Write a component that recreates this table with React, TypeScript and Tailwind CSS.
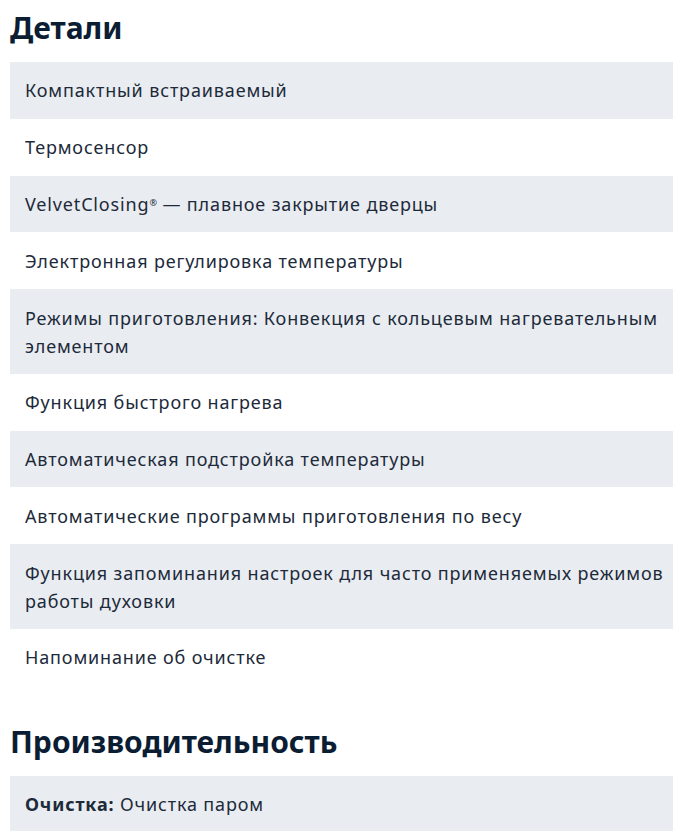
const details: React.ReactNode[] = [
  "Компактный встраиваемый",
  "Термосенсор",
  <>
    VelvetClosing<sup className="text-[9px] tracking-normal">®</sup> — плавное закрытие дверцы
  </>,
  "Электронная регулировка температуры",
  "Режимы приготовления: Конвекция с кольцевым нагревательным элементом",
  "Функция быстрого нагрева",
  "Автоматическая подстройка температуры",
  "Автоматические программы приготовления по весу",
  "Функция запоминания настроек для часто применяемых режимов работы духовки",
  "Напоминание об очистке",
];

function Row({ i, children }: { i: number; children: React.ReactNode }) {
  return (
    <li
      className={`pl-[15px] pr-[4px] py-[14.4px] text-[18px] leading-[28px] tracking-[0.85px] text-[#1c2a3a] ${
        i % 2 === 0 ? "bg-[#e9ecf0]" : "bg-white"
      }`}
    >
      {children}
    </li>
  );
}

export default function App() {
  return (
    <div className="bg-white min-h-screen pl-[10px] font-['Noto_Sans',sans-serif]">
      {/* Details */}
      <h2 className="pt-[7px] pb-[13px] text-[30px] leading-[42px] font-bold text-[#0b1d33]">
        Детали
      </h2>
      <ul>
        {details.map((d, i) => (
          <Row key={i} i={i}>
            {d}
          </Row>
        ))}
      </ul>

      {/* Performance */}
      <h2 className="mt-[35px] pb-[13px] text-[30px] leading-[42px] font-bold text-[#0b1d33]">
        Производительность
      </h2>
      <ul>
        <Row i={0}>
          <span className="font-bold">Очистка:</span> Очистка паром
        </Row>
      </ul>
    </div>
  );
}
